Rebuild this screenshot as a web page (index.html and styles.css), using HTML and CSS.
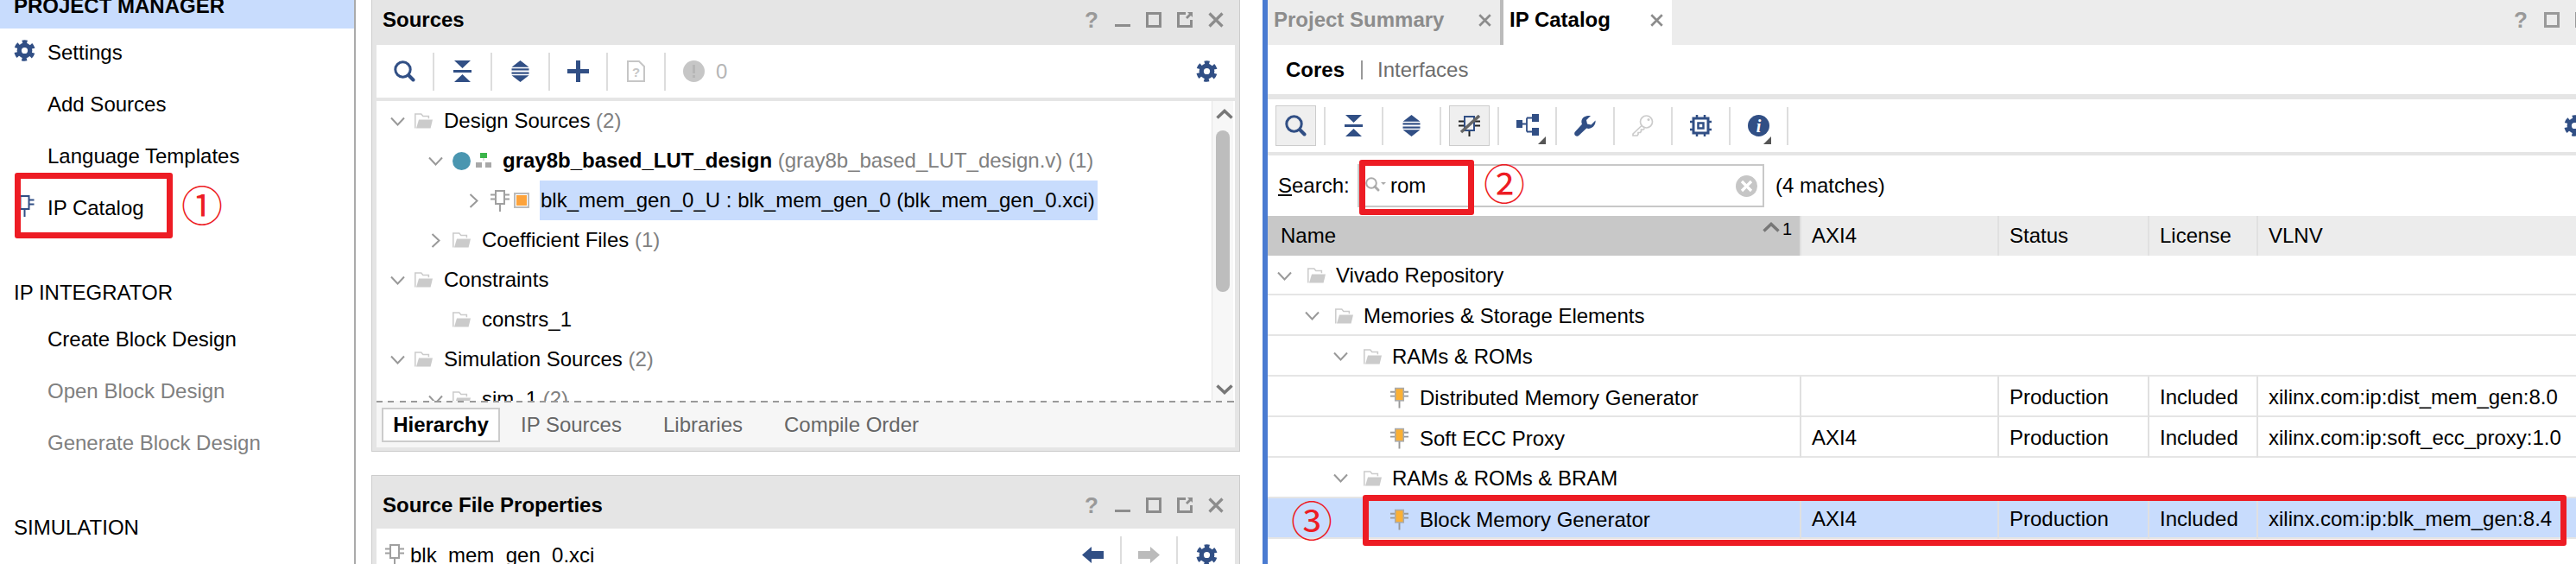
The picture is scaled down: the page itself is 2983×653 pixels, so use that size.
FILE: index.html
```html
<!DOCTYPE html>
<html lang="en">
<head>
<meta charset="UTF-8">
<title>Vivado IP Catalog</title>
<link rel="stylesheet" href="styles.css">
</head>
<body>
<svg class="defs" xmlns="http://www.w3.org/2000/svg">
  <symbol id="i-gear" viewBox="0 0 26 26">
    <circle cx="13" cy="13" r="6.5" fill="none" stroke="currentColor" stroke-width="5.5"/>
    <circle cx="13" cy="13" r="10.2" fill="none" stroke="currentColor" stroke-width="5" stroke-dasharray="5.6 5.08" transform="rotate(-105 13 13)"/>
  </symbol>
  <symbol id="i-ip" viewBox="0 0 22 25">
    <path d="M0 5.5h6M0 10.5h6M16 5.5h6M16 10.5h6M11 16v9" fill="none" stroke="currentColor" stroke-width="2"/>
    <rect x="6" y="1" width="10" height="15" fill="none" stroke="currentColor" stroke-width="2"/>
  </symbol>
  <symbol id="i-ip-leaf" viewBox="0 0 22 25">
    <path d="M0 5.5h6M0 10.5h6M16 5.5h6M16 10.5h6M11 16v9" fill="none" stroke="#999" stroke-width="2"/>
    <rect x="6" y="1" width="10" height="15" fill="#fbb034" stroke="#aaa" stroke-width="1.6"/>
  </symbol>
  <symbol id="i-folder" viewBox="0 0 21 18">
    <path d="M.8 17.5V1h7l2 2.4h6.6v2.8" fill="none" stroke="#cbcbcb" stroke-width="1.5"/>
    <path d="M5 7.5h16l-2.4 10H2z" fill="#cbcbcb"/>
  </symbol>
  <symbol id="i-down" viewBox="0 0 17 11">
    <path d="M1 1.5l7.5 8 7.5-8" fill="none" stroke="#999" stroke-width="2"/>
  </symbol>
  <symbol id="i-right" viewBox="0 0 11 17">
    <path d="M1.5 1l8 7.5-8 7.5" fill="none" stroke="#999" stroke-width="2"/>
  </symbol>
  <symbol id="i-search" viewBox="0 0 25 25">
    <circle cx="10.5" cy="10.5" r="8.7" fill="none" stroke="currentColor" stroke-width="3"/>
    <path d="M17.5 17.5l5 5" fill="none" stroke="currentColor" stroke-width="4" stroke-linecap="round"/>
  </symbol>
  <symbol id="i-collapse" viewBox="0 0 21 25">
    <path d="M1 0h19l-9.5 9zM10.5 16l9.5 9H1z" fill="#314f85"/>
    <rect y="11" width="21" height="3" fill="#314f85"/>
  </symbol>
  <symbol id="i-expand" viewBox="0 0 20 25">
    <path d="M10 0l10 7.700H0zM0 17.300h20L10 25z" fill="#314f85"/>
    <rect y="9.300" width="20" height="2.200" fill="#314f85"/>
    <rect y="13.500" width="20" height="2.200" fill="#314f85"/>
  </symbol>
  <symbol id="i-plus" viewBox="0 0 25 25">
    <path d="M10 0h5v10h10v5H15v10h-5V15H0v-5h10z" fill="#314f85"/>
  </symbol>
  <symbol id="i-doc" viewBox="0 0 21 25">
    <path d="M1 1h13l6 6v17H1z" fill="none" stroke="#c6c6c6" stroke-width="2"/>
    <text x="10.5" y="19" class="svg-q">?</text>
  </symbol>
  <symbol id="i-warn" viewBox="0 0 25 25">
    <circle cx="12.5" cy="12.5" r="12.5" fill="#c6c6c6"/>
    <rect x="11" y="5" width="3" height="10" fill="#b6b6b6"/>
    <rect x="11" y="17" width="3" height="3" fill="#b6b6b6"/>
  </symbol>
  <symbol id="i-top" viewBox="0 0 18 18">
    <rect x="5" y="0" width="8" height="6" fill="#3cb54a"/>
    <rect y="11" width="7" height="6" fill="#a8a8a8"/>
    <rect x="11" y="11" width="7" height="6" fill="#a8a8a8"/>
    <rect x="8" y="6" width="2" height="3" fill="#ddd"/>
  </symbol>
  <symbol id="i-strike" viewBox="0 0 25 25">
    <path d="M0 7.5h7M0 12.5h7M18 7.5h7M18 12.5h7M12.5 18v7" fill="none" stroke="#222" stroke-width="2"/>
    <rect x="7" y="2" width="11" height="16" fill="none" stroke="#314f85" stroke-width="2"/>
    <path d="M3 20L24 1" stroke="#666" stroke-width="3.5"/>
  </symbol>
  <symbol id="i-tree" viewBox="0 0 34 35">
    <path d="M0 7h7v9H0zM18 0h8v9h-8zM18 16h8v9h-8z" fill="#314f85"/>
    <path d="M7 11.5h5M12 4.5h6M12 4.5v16M12 20.5h6" fill="none" stroke="#314f85" stroke-width="1.8"/>
    <path d="M34 26v9h-9z" fill="#555"/>
  </symbol>
  <symbol id="i-wrench" viewBox="0 0 25 25">
    <path d="M24.5 6.500l-5 5-4.500-1-1-4.500 5-5C14.500.5 9.500 2 8.500 6.500c-.3 1.500-.1 3 .5 4.200L1 19.500c-1.300 1.500-1 3.400.2 4.500 1.200 1.100 3 1 4.200-.2l8.800-8.300c1.400.5 3 .6 4.400.1 4-1.300 6.400-5.600 5.900-9.100z" fill="#314f85"/>
  </symbol>
  <symbol id="i-key" viewBox="0 0 25 25">
    <circle cx="16.500" cy="8" r="7" fill="none" stroke="#cbcbcb" stroke-width="1.700"/>
    <circle cx="19" cy="5.500" r="1.500" fill="#cbcbcb"/>
    <path d="M11 12.500L1 22v2h5l1-1.500v-2h2.500l1-1.500v-2h2.500l1.500-1.500" fill="none" stroke="#cbcbcb" stroke-width="1.700"/>
  </symbol>
  <symbol id="i-chip" viewBox="0 0 25 25">
    <rect x="4" y="4" width="17" height="17" fill="none" stroke="#314f85" stroke-width="3"/>
    <rect x="9.500" y="9.500" width="6" height="6" fill="none" stroke="#314f85" stroke-width="2.500"/>
    <path d="M8 0v3M17 0v3M8 22v3M17 22v3M0 8h3M0 17h3M22 8h3M22 17h3" stroke="#314f85" stroke-width="2.500"/>
  </symbol>
  <symbol id="i-info" viewBox="0 0 28 34">
    <circle cx="12.500" cy="12.500" r="12.500" fill="#314f85"/>
    <text x="12.500" y="20" class="svg-i">i</text>
    <path d="M27 25v9h-9z" fill="#555"/>
  </symbol>
  <symbol id="i-clear" viewBox="0 0 25 25">
    <circle cx="12.500" cy="12.500" r="12.500" fill="#c6c6c6"/>
    <path d="M7 7l11 11M18 7L7 18" stroke="#fff" stroke-width="3.200"/>
  </symbol>
  <symbol id="i-drop" viewBox="0 0 24 20">
    <circle cx="7" cy="7" r="5.800" fill="none" stroke="#aaa" stroke-width="2"/>
    <path d="M11 11l4 4" stroke="#aaa" stroke-width="3" stroke-linecap="round"/>
    <path d="M18 6h6l-3 3z" fill="#aaa"/>
  </symbol>
  <symbol id="i-back" viewBox="0 0 25 19">
    <path d="M0 9.500L11 0v5h14v9H11v5z" fill="currentColor"/>
  </symbol>
  <symbol id="i-next" viewBox="0 0 25 19">
    <path d="M25 9.500L14 0v5H0v9h14v5z" fill="currentColor"/>
  </symbol>
  <symbol id="i-min" viewBox="0 0 18 18">
    <rect y="14" width="18" height="3" fill="currentColor"/>
  </symbol>
  <symbol id="i-max" viewBox="0 0 18 18">
    <rect x="1.500" y="1.500" width="15" height="15" fill="none" stroke="currentColor" stroke-width="3"/>
  </symbol>
  <symbol id="i-pop" viewBox="0 0 18 18">
    <path d="M10 1.500H1.500v15h15V9" fill="none" stroke="currentColor" stroke-width="3"/>
    <path d="M18 0v6l-2-2-4 4-2-2 4-4-2-2z" fill="currentColor"/>
  </symbol>
  <symbol id="i-x" viewBox="0 0 18 18">
    <path d="M1.500 1.500l15 15M16.500 1.500l-15 15" stroke="currentColor" stroke-width="3.200"/>
  </symbol>
  <symbol id="i-up-thick" viewBox="0 0 20 12">
    <path d="M1.500 10.500L10 2.500l8.500 8" fill="none" stroke="#777" stroke-width="3.500"/>
  </symbol>
  <symbol id="i-down-thick" viewBox="0 0 20 12">
    <path d="M1.500 1.500L10 9.500l8.500-8" fill="none" stroke="#777" stroke-width="3.500"/>
  </symbol>
</svg>

<!-- flow navigator -->
<nav class="flow-nav">
  <div class="nav-head">PROJECT MANAGER</div>
  <ul class="nav-list nav-first">
    <li class="nav-item"><svg class="nav-icon"><use href="#i-gear"/></svg>Settings</li>
    <li class="nav-item">Add Sources</li>
    <li class="nav-item">Language Templates</li>
    <li class="nav-item"><svg class="nav-icon"><use href="#i-ip"/></svg>IP Catalog</li>
  </ul>
  <div class="nav-section">IP INTEGRATOR</div>
  <ul class="nav-list">
    <li class="nav-item">Create Block Design</li>
    <li class="nav-item off">Open Block Design</li>
    <li class="nav-item off">Generate Block Design</li>
  </ul>
  <div class="nav-section nav-section-sim">SIMULATION</div>
</nav>

<!-- sources + properties -->
<div class="middle">
  <section class="panel panel-sources">
    <div class="title-bar">
      <span class="title">Sources</span>
      <div class="win-btns">
        <span class="win-btn win-q">?</span>
        <span class="win-btn"><svg class="win-icon"><use href="#i-min"/></svg></span>
        <span class="win-btn"><svg class="win-icon"><use href="#i-max"/></svg></span>
        <span class="win-btn"><svg class="win-icon"><use href="#i-pop"/></svg></span>
        <span class="win-btn"><svg class="win-icon"><use href="#i-x"/></svg></span>
      </div>
    </div>
    <div class="toolbar">
      <span class="tb-btn"><svg class="ic25 blue"><use href="#i-search"/></svg></span><i class="tb-sep"></i>
      <span class="tb-btn"><svg class="ic21"><use href="#i-collapse"/></svg></span><i class="tb-sep"></i>
      <span class="tb-btn"><svg class="ic21"><use href="#i-expand"/></svg></span><i class="tb-sep"></i>
      <span class="tb-btn"><svg class="ic25"><use href="#i-plus"/></svg></span><i class="tb-sep"></i>
      <span class="tb-btn"><svg class="ic21"><use href="#i-doc"/></svg></span><i class="tb-sep"></i>
      <span class="tb-count"><svg class="ic25"><use href="#i-warn"/></svg>0</span>
      <span class="tb-btn tb-end"><svg class="ic25 blue"><use href="#i-gear"/></svg></span>
    </div>
    <div class="tree-wrap">
      <div class="tree">
        <div class="row lv0"><svg class="chev"><use href="#i-down"/></svg><svg class="folder"><use href="#i-folder"/></svg>Design Sources<span class="dim">&nbsp;(2)</span></div>
        <div class="row lv1"><svg class="chev"><use href="#i-down"/></svg><i class="dot"></i><svg class="top-ic"><use href="#i-top"/></svg><b>gray8b_based_LUT_design</b><span class="dim">&nbsp;(gray8b_based_LUT_design.v) (1)</span></div>
        <div class="row lv2"><svg class="chev chev-r"><use href="#i-right"/></svg><svg class="ip-gray"><use href="#i-ip"/></svg><i class="core-sq"></i><span class="selected">blk_mem_gen_0_U : blk_mem_gen_0 (blk_mem_gen_0.xci)</span></div>
        <div class="row lv1"><svg class="chev chev-r"><use href="#i-right"/></svg><svg class="folder"><use href="#i-folder"/></svg>Coefficient Files<span class="dim">&nbsp;(1)</span></div>
        <div class="row lv0"><svg class="chev"><use href="#i-down"/></svg><svg class="folder"><use href="#i-folder"/></svg>Constraints</div>
        <div class="row lv1"><i class="chev"></i><svg class="folder"><use href="#i-folder"/></svg>constrs_1</div>
        <div class="row lv0"><svg class="chev"><use href="#i-down"/></svg><svg class="folder"><use href="#i-folder"/></svg>Simulation Sources<span class="dim">&nbsp;(2)</span></div>
        <div class="row lv1"><svg class="chev"><use href="#i-down"/></svg><svg class="folder"><use href="#i-folder"/></svg>sim_1<span class="dim">&nbsp;(2)</span></div>
      </div>
      <div class="scrollbar">
        <svg class="scroll-arrow"><use href="#i-up-thick"/></svg>
        <div class="thumb"></div>
        <svg class="scroll-arrow"><use href="#i-down-thick"/></svg>
      </div>
    </div>
    <div class="tabs">
      <span class="tab active">Hierarchy</span>
      <span class="tab">IP Sources</span>
      <span class="tab">Libraries</span>
      <span class="tab">Compile Order</span>
    </div>
  </section>

  <section class="panel panel-props">
    <div class="title-bar title-bar-props">
      <span class="title">Source File Properties</span>
      <div class="win-btns">
        <span class="win-btn win-q">?</span>
        <span class="win-btn"><svg class="win-icon"><use href="#i-min"/></svg></span>
        <span class="win-btn"><svg class="win-icon"><use href="#i-max"/></svg></span>
        <span class="win-btn"><svg class="win-icon"><use href="#i-pop"/></svg></span>
        <span class="win-btn"><svg class="win-icon"><use href="#i-x"/></svg></span>
      </div>
    </div>
    <div class="props-bar">
      <svg class="ip-gray"><use href="#i-ip"/></svg>
      <span>blk_mem_gen_0.xci</span>
      <span class="props-tools">
        <span class="prop-btn"><svg class="arrow blue"><use href="#i-back"/></svg></span><i class="tb-sep"></i>
        <span class="prop-btn"><svg class="arrow off-ic"><use href="#i-next"/></svg></span><i class="tb-sep"></i>
        <span class="prop-btn prop-gear"><svg class="ic25 blue"><use href="#i-gear"/></svg></span>
      </span>
    </div>
  </section>
</div>

<!-- ip catalog -->
<main class="catalog">
  <div class="doc-tabs">
    <span class="doc-tab"><span class="doc-name">Project Summary</span><svg class="doc-x"><use href="#i-x"/></svg></span>
    <span class="doc-tab current"><span class="doc-name">IP Catalog</span><svg class="doc-x"><use href="#i-x"/></svg></span>
    <div class="win-btns doc-win">
      <span class="win-btn win-q">?</span>
      <span class="win-btn"><svg class="win-icon"><use href="#i-max"/></svg></span>
      <span class="win-btn"><svg class="win-icon"><use href="#i-pop"/></svg></span>
    </div>
  </div>
  <div class="views"><b>Cores</b><i class="views-sep"></i><span>Interfaces</span></div>
  <div class="toolbar toolbar-ip">
    <span class="tb-btn"><span class="pressed"><svg class="ic25 blue"><use href="#i-search"/></svg></span></span><i class="tb-sep"></i>
    <span class="tb-btn"><svg class="ic21"><use href="#i-collapse"/></svg></span><i class="tb-sep"></i>
    <span class="tb-btn"><svg class="ic21"><use href="#i-expand"/></svg></span><i class="tb-sep"></i>
    <span class="tb-btn"><span class="pressed"><svg class="ic25"><use href="#i-strike"/></svg></span></span><i class="tb-sep"></i>
    <span class="tb-btn"><svg class="ic-tree"><use href="#i-tree"/></svg></span><i class="tb-sep"></i>
    <span class="tb-btn"><svg class="ic25"><use href="#i-wrench"/></svg></span><i class="tb-sep"></i>
    <span class="tb-btn"><svg class="ic25"><use href="#i-key"/></svg></span><i class="tb-sep"></i>
    <span class="tb-btn"><svg class="ic25"><use href="#i-chip"/></svg></span><i class="tb-sep"></i>
    <span class="tb-btn"><svg class="ic-info"><use href="#i-info"/></svg></span><i class="tb-sep"></i>
    <span class="tb-btn tb-end tb-cut"><svg class="ic25 blue"><use href="#i-gear"/></svg></span>
  </div>
  <div class="search-row">
    <label class="search-label"><u>S</u>earch:</label>
    <div class="search-box">
      <svg class="search-ic"><use href="#i-drop"/></svg>
      <span>rom</span>
      <svg class="clear-ic"><use href="#i-clear"/></svg>
    </div>
    <span class="matches">(4 matches)</span>
  </div>
  <div class="ip-grid ip-head">
    <div class="col-name">Name<svg class="sort-ic"><use href="#i-up-thick"/></svg><span class="sort-no">1</span></div>
    <div class="cell">AXI4</div>
    <div class="cell">Status</div>
    <div class="cell">License</div>
    <div class="cell">VLNV</div>
  </div>
  <div class="ip-grid ip-row ip-first"><div class="name n0"><svg class="chev"><use href="#i-down"/></svg><svg class="folder"><use href="#i-folder"/></svg>Vivado Repository</div></div>
  <div class="ip-grid ip-row"><div class="name n1"><svg class="chev"><use href="#i-down"/></svg><svg class="folder"><use href="#i-folder"/></svg>Memories &amp; Storage Elements</div></div>
  <div class="ip-grid ip-row"><div class="name n2"><svg class="chev"><use href="#i-down"/></svg><svg class="folder"><use href="#i-folder"/></svg>RAMs &amp; ROMs</div></div>
  <div class="ip-grid ip-row">
    <div class="name n3"><svg class="leaf"><use href="#i-ip-leaf"/></svg>Distributed Memory Generator</div>
    <div class="cell"></div><div class="cell">Production</div><div class="cell">Included</div><div class="cell">xilinx.com:ip:dist_mem_gen:8.0</div>
  </div>
  <div class="ip-grid ip-row">
    <div class="name n3"><svg class="leaf"><use href="#i-ip-leaf"/></svg>Soft ECC Proxy</div>
    <div class="cell">AXI4</div><div class="cell">Production</div><div class="cell">Included</div><div class="cell">xilinx.com:ip:soft_ecc_proxy:1.0</div>
  </div>
  <div class="ip-grid ip-row"><div class="name n2"><svg class="chev"><use href="#i-down"/></svg><svg class="folder"><use href="#i-folder"/></svg>RAMs &amp; ROMs &amp; BRAM</div></div>
  <div class="ip-grid ip-row ip-selected">
    <div class="name n3"><svg class="leaf"><use href="#i-ip-leaf"/></svg>Block Memory Generator</div>
    <div class="cell">AXI4</div><div class="cell">Production</div><div class="cell">Included</div><div class="cell">xilinx.com:ip:blk_mem_gen:8.4</div>
  </div>
</main>

<!-- red annotations drawn over the screenshot -->
<div class="mark mark-1"></div>
<div class="mark mark-2"></div>
<div class="mark mark-3"></div>
<span class="num num-1">①</span>
<span class="num num-2">②</span>
<span class="num num-3">③</span>
</body>
</html>
```

FILE: styles.css
```css
* {
  box-sizing: border-box;
}
html, body {
  margin: 0;
  height: 653px;
  overflow: hidden;
}
body {
  position: relative;
  display: flex;
  width: 2983px;
  background: #fff;
  color: #000;
  font-family: "Liberation Sans", Arial, sans-serif;
  font-size: 24px;
}
.defs {
  position: absolute;
  width: 0;
  height: 0;
}
.svg-q {
  font: bold 15px "Liberation Sans", sans-serif;
  fill: #c6c6c6;
  text-anchor: middle;
}
.svg-i {
  font: italic bold 20px "Liberation Serif", serif;
  fill: #fff;
  text-anchor: middle;
}
.blue { color: #314f85; }
.off-ic { color: #bbb; }

/* left nav */
.flow-nav {
  flex: none;
  width: 412px;
  border-right: 2px solid #aaa;
}
.nav-head {
  height: 33px;
  padding: 0 16px;
  background: #c8dcfd;
  font-weight: bold;
  line-height: 14px;
  overflow: hidden;
}
.nav-list {
  list-style: none;
  margin: 0;
  padding: 0;
}
.nav-first {
  margin-top: -2px;
}
.nav-item {
  position: relative;
  height: 60px;
  padding-left: 55px;
  line-height: 60px;
}
.nav-item.off {
  color: #808080;
}
.nav-icon {
  position: absolute;
  left: 16px;
  top: 15px;
  width: 25px;
  height: 25px;
  color: #314f85;
}
.nav-section {
  height: 30px;
  margin: 53px 0 9px;
  padding-left: 16px;
  line-height: 30px;
}
.nav-section-sim {
  margin-top: 53px;
}

/* middle column */
.middle {
  flex: none;
  width: 1006px;
  margin-left: 18px;
}
.panel {
  background: #e5e5e5;
  border: 1px solid #ccc;
  border-top: 0;
  padding: 0 5px;
}
.panel-sources {
  height: 523px;
}
.panel-props {
  height: 103px;
  margin-top: 27px;
  border-top: 1px solid #ccc;
  border-bottom: 0;
}
.title-bar {
  display: flex;
  align-items: center;
  height: 52px;
  padding: 0 0 6px 7px;
}
.title-bar-props {
  height: 61px;
  padding: 7px 0 0 7px;
}
.title {
  font-weight: bold;
}
.win-btns {
  display: flex;
  margin-left: auto;
  margin-right: 4px;
  color: #8c8c8c;
}
.win-btn {
  display: flex;
  align-items: center;
  justify-content: center;
  width: 36px;
  height: 24px;
}
.win-q {
  font: bold 26px "Liberation Sans", sans-serif;
  color: #999;
}
.win-icon {
  width: 18px;
  height: 18px;
}
.toolbar {
  display: flex;
  align-items: center;
  height: 61px;
  background: #fff;
}
.tb-btn {
  display: flex;
  flex: none;
  align-items: center;
  justify-content: center;
  width: 65px;
  height: 100%;
}
.tb-sep {
  flex: none;
  width: 2px;
  height: 44px;
  background: #ddd;
}
.tb-end {
  width: 66px;
  margin-left: auto;
}
.tb-count {
  display: flex;
  align-items: center;
  gap: 13px;
  padding-left: 20px;
  color: #b5b5b5;
}
.ic25 { width: 25px; height: 25px; }
.ic21 { width: 21px; height: 25px; }
.tree-wrap {
  display: flex;
  height: 347px;
  margin-top: 4px;
  background: #fff;
  overflow: hidden;
}
.tree {
  flex: 1;
  min-width: 0;
}
.row {
  display: flex;
  align-items: center;
  height: 46px;
  white-space: nowrap;
}
.lv0 { padding-left: 16px; }
.lv1 { padding-left: 60px; }
.lv2 { padding-left: 104px; }
.chev {
  flex: none;
  width: 17px;
  height: 11px;
  margin-right: 11px;
}
.chev-r {
  height: 17px;
}
.folder {
  flex: none;
  width: 21px;
  height: 18px;
  margin-right: 13px;
}
.dim {
  color: #808080;
}
.dot {
  flex: none;
  width: 21px;
  height: 21px;
  margin-right: 6px;
  border-radius: 50%;
  background: #4a96b0;
}
.top-ic {
  flex: none;
  width: 18px;
  height: 18px;
  margin-right: 13px;
}
.ip-gray {
  flex: none;
  width: 22px;
  height: 25px;
  color: #a0a0a0;
}
.core-sq {
  flex: none;
  width: 18px;
  height: 18px;
  margin: 0 12px 0 5px;
  border: 2px solid #bbb;
  background: #fff;
  box-shadow: inset 0 0 0 1px #fff, inset 0 0 0 10px #fda33b;
}
.selected {
  height: 46px;
  padding: 0 3px 0 1px;
  background: #c8dcfd;
  line-height: 46px;
}
.scrollbar {
  display: flex;
  flex: none;
  flex-direction: column;
  align-items: center;
  width: 25px;
  margin-right: 2px;
  border-left: 1px solid #e5e5e5;
  background: #f7f7f7;
}
.scroll-arrow {
  flex: none;
  width: 20px;
  height: 12px;
  margin: 9px 0 0 4px;
}
.thumb {
  flex: none;
  width: 16px;
  height: 187px;
  margin: 13px 0 98px;
  border-radius: 8px;
  background: #bdbdbd;
}
.tabs {
  display: flex;
  align-items: center;
  height: 54px;
  padding: 2px 0 0 6px;
  background-color: #f6f6f6;
  background-image: repeating-linear-gradient(90deg, #999 0 7px, transparent 7px 13.5px);
  background-size: 100% 2px;
  background-repeat: no-repeat;
  color: #666;
}
.tab {
  padding: 0 24px;
}
.tab.active {
  width: 137px;
  height: 40px;
  padding: 0;
  border: 2px solid #ccc;
  background: #fff;
  color: #000;
  font-weight: bold;
  line-height: 36px;
  text-align: center;
}
.props-bar {
  display: flex;
  align-items: center;
  gap: 7px;
  height: 61px;
  padding-left: 10px;
  background: #fff;
}
.props-tools {
  display: flex;
  align-items: center;
  margin-left: auto;
}
.prop-btn {
  display: flex;
  justify-content: center;
  width: 63px;
}
.prop-gear {
  width: 66px;
}
.arrow {
  width: 25px;
  height: 19px;
}

/* ip catalog */
.catalog {
  flex: none;
  width: 1521px;
  margin-left: 26px;
  border-left: 6px solid #4a7bd1;
  overflow: hidden;
}
.doc-tabs {
  display: flex;
  height: 52px;
  background: #ececec;
}
.doc-tab {
  display: flex;
  align-items: center;
  height: 52px;
  padding: 0 0 6px 7px;
  font-weight: bold;
}
.doc-tab:first-child {
  width: 273px;
  border-right: 4px solid #bbb;
  color: #8c8c8c;
}
.doc-tab.current {
  width: 195px;
  background: #fff;
}
.doc-x {
  width: 15px;
  height: 15px;
  margin-left: auto;
  margin-right: 10px;
  color: #8c8c8c;
}
.doc-win {
  align-self: center;
  margin-right: -26px;
  padding-bottom: 6px;
  color: #999;
  box-sizing: content-box;
}
.views {
  display: flex;
  align-items: center;
  height: 57px;
  padding-left: 21px;
  color: #6d6d6d;
}
.views b {
  color: #000;
}
.views-sep {
  width: 2px;
  height: 22px;
  margin: 0 17px 0 19px;
  background: #999;
}
.toolbar-ip {
  border-top: 6px solid #e5e5e5;
  border-bottom: 4px solid #e5e5e5;
  height: 71px;
}
.pressed {
  display: flex;
  align-items: center;
  justify-content: center;
  width: 47px;
  height: 47px;
  border: 1px solid #ccc;
  background: #efefef;
}
.ic-tree {
  width: 34px;
  height: 35px;
  margin: 8px 0 0 8px;
}
.ic-info {
  width: 28px;
  height: 34px;
  margin: 8px 0 0 3px;
}
.tb-cut {
  margin-right: -31px;
}
.search-row {
  display: flex;
  align-items: center;
  height: 70px;
  padding-left: 12px;
}
.search-label {
  width: 92px;
}
.search-box {
  display: flex;
  align-items: center;
  width: 471px;
  height: 50px;
  padding-left: 7px;
  border: 2px solid #c8c8c8;
}
.search-ic {
  width: 24px;
  height: 20px;
  margin-right: 5px;
}
.clear-ic {
  width: 25px;
  height: 25px;
  margin-left: auto;
  margin-right: 6px;
}
.matches {
  margin-left: 13px;
}
.ip-grid {
  display: grid;
  grid-template-columns: 616px 229px 174px 126px 1fr;
  align-items: center;
  white-space: nowrap;
}
.ip-head {
  height: 46px;
  background: #ececec;
}
.col-name {
  position: relative;
  height: 46px;
  padding-left: 15px;
  background: #c8c8c8;
  line-height: 46px;
}
.sort-ic {
  position: absolute;
  left: 573px;
  top: 7px;
  width: 20px;
  height: 12px;
}
.sort-no {
  position: absolute;
  left: 596px;
  top: 3px;
  font-size: 20px;
  line-height: 24px;
}
.cell {
  height: 100%;
  padding-left: 12px;
  border-left: 2px solid #e0e0e0;
  line-height: 47px;
}
.ip-head .cell {
  line-height: 46px;
}
.ip-row {
  height: 47px;
  border-bottom: 2px solid #e5e5e5;
}
.ip-first {
  height: 46px;
}
.name {
  display: flex;
  align-items: center;
  padding-top: 2px;
}
.n0 { padding-left: 11px; }
.n1 { padding-left: 43px; }
.n2 { padding-left: 76px; }
.n3 { padding-left: 142px; }
.ip-row .chev {
  margin-right: 18px;
}
.ip-row .folder {
  margin-right: 12px;
}
.leaf {
  flex: none;
  width: 21px;
  height: 25px;
  margin-right: 13px;
}
.ip-selected {
  background: #c8dcfd;
}

/* annotations */
.mark {
  position: absolute;
  border: 7px solid #ed1c24;
  border-radius: 3px;
}
.mark-1 { left: 17px; top: 200px; width: 183px; height: 76px; }
.mark-2 { left: 1574px; top: 185px; width: 133px; height: 64px; }
.mark-3 { left: 1578px; top: 573px; width: 1394px; height: 59px; }
.num {
  position: absolute;
  color: #ed1c24;
  font-family: "Noto Sans CJK SC", sans-serif;
  font-size: 48px;
  line-height: 48px;
  width: 48px;
  text-align: center;
}
.num-1 { left: 210px; top: 211px; }
.num-2 { left: 1718px; top: 186px; }
.num-3 { left: 1495px; top: 576px; }
```
